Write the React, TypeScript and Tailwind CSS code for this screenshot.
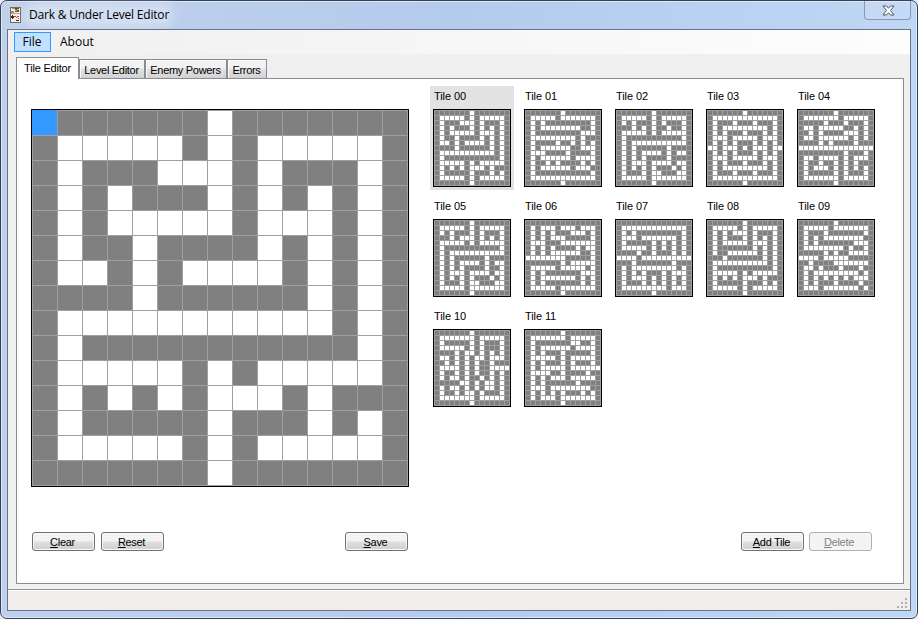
import type { ReactNode } from "react";

const TILES: string[][] = [
  ["#######.#######", "#.....#.#.....#", "#.###...#.###.#", "#.#.###.#.#.#.#", "#.#.....#...#.#", "#.##.####.#.#.#", "#..#.#....#.#.#", "####.######.#.#", "#...........#.#", "#.###########.#", "#.....#.#.....#", "#.#.#.#...#.###", "#.#####.###.#.#", "#.....#.#.....#", "#######.#######"],
  ["#######.#######", "#.....#.......#", "#.#.#########.#", "#.#........##.#", "#.#########...#", "#.........#.###", "#.####.##.#.#.#", "#.#......##...#", "#...####.####.#", "#.#......#....#", "#.##.#.####.#.#", "#.#......#...##", "#.###########.#", "#.............#", "#######.#######"],
  ["#######.#######", "#.....#.#.....#", "#.#.###.#.###.#", "###.#.#.##.##.#", "#.....#.#.....#", "#.###########.#", "#.#...........#", "#.#.######.####", "#.#.#....#.#..#", "#.#.#.####.####", "#.#...#....#..#", "#.#.#.#.###.#.#", "#.###.#..###..#", "#.....#.......#", "#######.#######"],
  ["#######.#######", "#.............#", "#.###.###.###.#", "#.#.........#.#", "#.#.###.###.#.#", "#...#.....#...#", "#.#.#.###.#.#.#", "..#...#.#...#..", "#.#.#.###.#.#.#", "#...#.....#...#", "#.#.###.###.#.#", "#.#.........#.#", "#.###.###.###.#", "#.............#", "#######.#######"],
  ["#######.#######", "#.......#.....#", "#####.###.###.#", "#..#.....##.#.#", "##.#.####...#.#", "#..#......#.#.#", "####.#.####.###", "...............", "#########.###.#", "#..#....#.#...#", "#.##.##.#.#.###", "#.#...#.#.#.#.#", "#.#####.#.###.#", "#.......#.....#", "#######.#######"],
  ["#######.#######", "#.....#.#.....#", "#.#.###.#.###.#", "###.#...#.#.#.#", "#.....#.#.....#", "#.###########.#", "#.#...........#", "#.#.######.####", "#.#.#....#.#..#", "#.#.#.####.##.#", "#.#...#....#..#", "#.#.#.#.###.#.#", "#.###.#..###..#", "#.....#.......#", "#######.#######"],
  ["###############", "#.#...#...#...#", "#.#.#.###...#.#", "#.#.#...#####.#", "#...###.......#", "#.#.#.####.#..#", "#.#.#......##.#", "........#####.#", "#######.#.....#", "#.....#.....#.#", "#.#.#######...#", "#.#.......#.#.#", "#.#.#######.#.#", "#.....#.......#", "#######.#######"],
  ["###############", "#.............#", "#.#.#########.#", "#...#.......#.#", "#.#####.#.#.#.#", "#.....#.#.#.#.#", "####.##.###.#.#", "....#..........", "###.#######.###", "#.#.........#.#", "#.#.#.###.#...#", "#.#...#.#.#.#.#", "#.###.#.#.#.#.#", "#.........#...#", "#######.#######"],
  ["#######.#######", "#.....#.#.....#", "#.#.#...#.###.#", "#.#.###.#.#.#.#", "#.#.....#...#.#", "#.#######.#.#.#", "#.##......#.#.#", "###.#######.#.#", "#...........#.#", "#.###########.#", "#.....#.#.....#", "#.#.#.#...#.###", "#.#####.###.#.#", "#.....#.#.....#", "#######.#######"],
  ["#######.#######", "#.....#.......#", "#.###.#######.#", "#.#.#........##", "#.#.#######...#", "#........#.##.#", "#####.#.##....#", "....#.....#####", "##.####.......#", "#..#.###.###.##", "#.#.........#.#", "#.#.#.#.#.#...#", "#.#.###.####.##", "#...#.......#.#", "###############"],
  ["#######.#######", "#.......#.....#", "#.#####.#.###.#", "#.....#.#.###.#", "####.#..#.#.#.#", "#..#.#.#..#...#", "##.#.#.#.##.###", "#....#.#.##....", "#.##.#.#.##.#.#", "#.#..#.##.#.#.#", "#####..#.#..#.#", "#.#..#.#.#..#.#", "#.##.#..#.###.#", "#.......#.....#", "#######.#######"],
  ["#######.#######", "#.......#.....#", "#.#######..##.#", "#.#......#....#", "#.#.###.#####.#", "#.....#.#.....#", "#.#.###.#.###.#", "#.#.....#......", "#....##.####.##", "#.#.#...#.....#", "#.#.######.####", "#...#........##", "#.#.#.#.###.#.#", "#.#...#.......#", "#######.#######"],
];

function TileGrid({ rows, large = false }: { rows: string[]; large?: boolean }) {
  return (
    <div className={large ? "size-[378px] border border-black" : "size-[78px] border border-black"}>
      <div
        className={
          large
            ? "grid size-[376px] grid-cols-[repeat(15,25px)] grid-rows-[repeat(15,25px)] border-r border-b border-[#a0a0a0]"
            : "grid size-[76px] grid-cols-[repeat(15,5px)] grid-rows-[repeat(15,5px)] border-r border-b border-[#a0a0a0]"
        }
      >
        {rows.flatMap((row, y) =>
          [...row].map((c, x) => (
            <div
              key={`${x}-${y}`}
              className={
                large && x === 0 && y === 0
                  ? "bg-[#3399ff]"
                  : c === "#"
                    ? "border-t border-l border-[#a0a0a0] bg-[#808080]"
                    : "border-t border-l border-[#a0a0a0] bg-white"
              }
            />
          )),
        )}
      </div>
    </div>
  );
}

function Button({ children, disabled = false }: { children: ReactNode; disabled?: boolean }) {
  return (
    <button
      disabled={disabled}
      className={
        disabled
          ? "flex h-[19px] w-[63px] items-center justify-center rounded-[3px] border border-[#adb2b5] bg-[#f4f4f4] pt-[2px] pr-[3px] text-[#838383]"
          : "flex h-[19px] w-[63px] items-center justify-center rounded-[3px] border border-[#707070] bg-linear-to-b from-[#f3f3f3] from-45% via-[#dedede] via-55% to-[#cfcfcf] pt-[2px] pr-[2px] text-black shadow-[inset_0_0_0_1px_#f8f8f8]"
      }
    >
      <span className="whitespace-nowrap">{children}</span>
    </button>
  );
}

function Tab({ label, width }: { label: string; width: string }) {
  return (
    <div
      className={`${width} flex h-[19px] items-center justify-center border border-b-0 border-[#898c95] bg-linear-to-b from-[#f2f2f2] from-45% via-[#e3e3e3] via-50% to-[#d2d2d2] pt-[3px] pr-px whitespace-nowrap shadow-[inset_1px_1px_0_#fafafa]`}
    >
      {label}
    </div>
  );
}

export default function App() {
  return (
    <div className="h-[619px] w-[918px] overflow-hidden bg-[#e8ecf2] font-['Liberation_Sans',Arial,sans-serif] text-[11px] leading-[13px] tracking-[-0.3px] text-black">
      <div className="flex h-full flex-col rounded-[7px] border border-[#37415a] bg-linear-to-r from-[#c0d1ec] via-[#b5cbec] to-[#bfd6f5] px-[6px] pb-[7px] shadow-[inset_0_0_0_1px_#dce8f8]">
        <header className="flex h-[28px] shrink-0 justify-between">
          <div className="flex items-center">
            <svg width="12" height="16" viewBox="0 0 12 16" className="ml-[3px]">
              <rect x=".5" y=".5" width="10" height="15" fill="#f4eee8" stroke="#74695f" />
              <path d="M2 1h4v1H2zM1 4h3v2H1z" fill="#9b8b7b" />
              <path d="M5 1h4v4H5z" fill="#65512f" />
              <path d="M5 3h2v1H5zM7 2h2v1H7z" fill="#e0ad3e" />
              <path d="M1 6h9v1H1z" fill="#b3a69a" />
              <path d="M1 9h3v2H1zM2 8h1v4H2zM6 13h3v1H6z" fill="#332d2d" />
              <path d="M4 9h2v1H4zM7 9h2v1H7zM6 10h1v1H6zM8 11h1v1H8z" fill="#c43d3d" />
            </svg>
            <h1 className="ml-[7px] rounded-full bg-white/30 font-['Open_Sans','Noto_Sans',sans-serif] text-[12px] leading-4 font-normal tracking-[-0.2px] whitespace-nowrap shadow-[0_0_9px_5px_rgba(255,255,255,0.3)]">
              Dark &amp; Under Level Editor
            </h1>
          </div>
          <div className="flex h-[19px] w-[47px] items-center justify-center rounded-b-[4px] border border-t-0 border-[#8799b6] bg-white/10">
            <svg width="13" height="11" viewBox="0 0 13 11" className="mt-px ml-px">
              <path d="M1 1h3.500l2 2.300 2-2.300H12L8.500 5.500 12 10H8.500l-2-2.300-2 2.300H1l3.500-4.500z" fill="#fff" stroke="#505969" strokeLinejoin="round" />
            </svg>
          </div>
        </header>

        <main className="flex h-[583px] w-[904px] flex-col border border-[#69748a] bg-[#f0f0f0]">
          <nav className="flex h-[24px] shrink-0 items-center bg-linear-to-r from-[#f0f0f0] to-[#fdfdfd] pl-[6px] font-['Open_Sans','Noto_Sans',sans-serif] text-[12px] leading-4 tracking-normal">
            <div className="flex h-[20px] w-[37px] items-center justify-center border border-[#3399ff] bg-[#c2e0ff] pr-px">File</div>
            <div className="ml-[9px]">About</div>
          </nav>

          <div className="mt-[3px] flex h-[21px] shrink-0 items-end pl-[8px]">
            <div className="z-10 -mb-px flex h-[22px] w-[63px] items-center justify-center border border-b-0 border-[#898c95] bg-white pb-px tracking-[-0.2px] whitespace-nowrap">
              Tile Editor
            </div>
            <Tab label="Level Editor" width="w-[66px]" />
            <Tab label="Enemy Powers" width="w-[82px]" />
            <Tab label="Errors" width="w-[40px]" />
          </div>

          <section className="ml-[8px] flex h-[506px] w-[888px] shrink-0 flex-col border border-[#898c95] bg-white">
            <div className="flex h-[453px] shrink-0">
              <div className="mt-[30px] ml-[14px]">
                <TileGrid rows={TILES[0]} large />
              </div>
              <div className="mt-[7px] ml-[21px] grid grid-cols-[repeat(5,84px)] content-start gap-x-[7px] gap-y-[6px]">
                {TILES.map((rows, i) => (
                  <div key={i} className={i === 0 ? "h-[104px] bg-[#e2e2e2] px-[3px] pt-[4px]" : "h-[104px] px-[3px] pt-[4px]"}>
                    <div className="mb-[6px] pl-px tracking-[-0.1px]">Tile {String(i).padStart(2, "0")}</div>
                    <TileGrid rows={rows} />
                  </div>
                ))}
              </div>
            </div>
            <div className="flex pl-[15px]">
              <Button><u>C</u>lear</Button>
              <div className="ml-[6px]"><Button><u>R</u>eset</Button></div>
              <div className="ml-[181px]"><Button><u>S</u>ave</Button></div>
              <div className="ml-[333px]"><Button><u>A</u>dd Tile</Button></div>
              <div className="ml-[5px]"><Button disabled><u>D</u>elete</Button></div>
            </div>
          </section>

          <footer className="mt-[5px] flex flex-1 items-end justify-end border-t border-[#919191] bg-[#f0edec] shadow-[inset_0_1px_0_#ffffff]">
            <svg width="12" height="12" viewBox="0 0 12 12" className="mr-px mb-px" fill="#b3afb0">
              <path d="M8 1h2v2H8zM4 5h2v2H4zM8 5h2v2H8zM0 9h2v2H0zM4 9h2v2H4zM8 9h2v2H8z" />
            </svg>
          </footer>
        </main>
      </div>
    </div>
  );
}
